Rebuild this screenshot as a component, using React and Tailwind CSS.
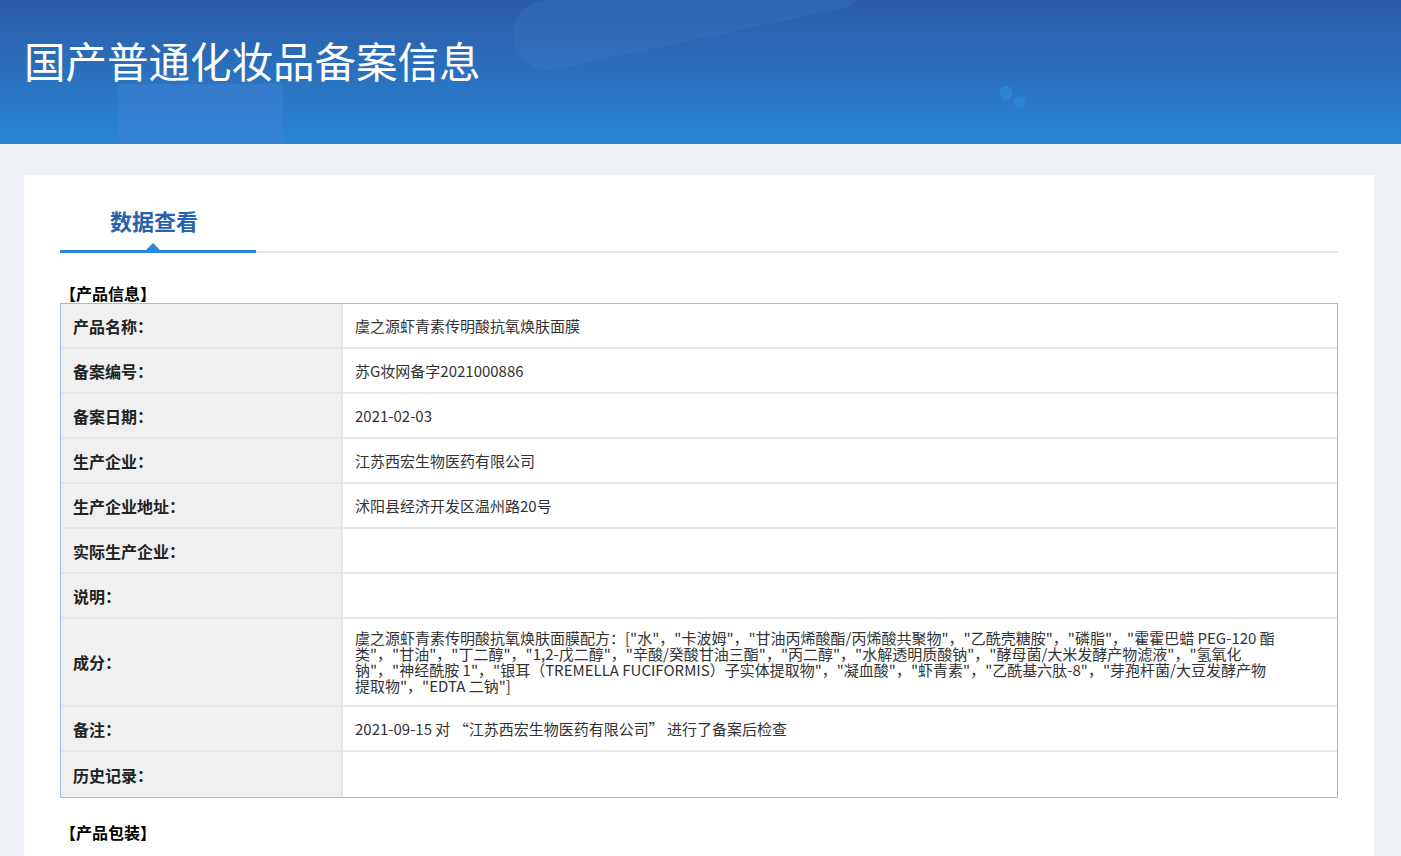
import React from 'react';

const rows = [
  { label: '产品名称：', value: '虞之源虾青素传明酸抗氧焕肤面膜' },
  { label: '备案编号：', value: '苏G妆网备字2021000886' },
  { label: '备案日期：', value: '2021-02-03' },
  { label: '生产企业：', value: '江苏西宏生物医药有限公司' },
  { label: '生产企业地址：', value: '沭阳县经济开发区温州路20号' },
  { label: '实际生产企业：', value: '' },
  { label: '说明：', value: '' },
  {
    label: '成分：',
    value:
      '虞之源虾青素传明酸抗氧焕肤面膜配方：["水"，"卡波姆"，"甘油丙烯酸酯/丙烯酸共聚物"，"乙酰壳糖胺"，"磷脂"，"霍霍巴蜡 PEG-120 酯类"，"甘油"，"丁二醇"，"1,2-戊二醇"，"辛酸/癸酸甘油三酯"，"丙二醇"，"水解透明质酸钠"，"酵母菌/大米发酵产物滤液"，"氢氧化钠"，"神经酰胺 1"，"银耳（TREMELLA FUCIFORMIS）子实体提取物"，"凝血酸"，"虾青素"，"乙酰基六肽-8"，"芽孢杆菌/大豆发酵产物提取物"，"EDTA 二钠"]',
    tall: true,
  },
  { label: '备注：', value: '2021-09-15 对 “江苏西宏生物医药有限公司” 进行了备案后检查' },
  { label: '历史记录：', value: '' },
];

const Header = () => {
  return (
    <header className="relative h-[144px] overflow-hidden bg-gradient-to-b from-[#2a5ca8] to-[#2985d3]">
      {/* soft background shapes */}
      <div className="absolute left-[118px] top-[84px] h-[60px] w-[165px] bg-[#3d82d4] opacity-50" />
      <div className="absolute left-[510px] top-[-30px] h-[70px] w-[360px] -rotate-12 rounded-full bg-[#4a86cc] opacity-20" />
      <div className="absolute left-[1000px] top-[86px] flex gap-[2px] opacity-60">
        <div className="h-[14px] w-[12px] rounded-full bg-[#2f8ce0]" />
        <div className="mt-[10px] h-[12px] w-[11px] rounded-full bg-[#2f8ce0]" />
      </div>
      <h1 className="relative pl-[24px] pt-[34px] text-[41.5px] leading-[52px] text-white">
        国产普通化妆品备案信息
      </h1>
    </header>
  );
};

const App = () => {
  return (
    <div className="min-h-[856px] bg-[#eef2f6]" style={{ fontFamily: '"Noto Sans CJK SC", sans-serif' }}>
      <Header />
      <main className="px-[24px] pt-[31px]">
        <div className="w-[1350px] bg-white px-[36px] pt-[27px] pb-[24px]">
          {/* tabs */}
          <div className="flex border-b-2 border-[#e6e6e6]">
            <div className="relative -mb-[2px] w-[196px] border-b-[3px] border-[#2a87d8] pb-[12px] pr-[8px] text-center text-[22px] font-bold leading-[36px] text-[#2662ad]">
              数据查看
              <div className="absolute bottom-0 left-[86px] h-0 w-0 border-x-[7px] border-b-[7px] border-x-transparent border-b-[#2a87d8]" />
            </div>
          </div>

          <h2 className="mt-[30px] text-[16px] font-bold leading-[20px] text-black">【产品信息】</h2>
          <div className="border border-[#9cbce8]">
            {rows.map((r, i) => (
              <div key={i} className={`flex ${i < rows.length - 1 ? 'border-b-2 border-[#e6e6e6]' : ''} ${r.tall ? 'h-[88px]' : 'h-[45px]'}`}>
                <div className="flex w-[280px] shrink-0 items-center bg-[#f0f0f0] pl-[12px] text-[16px] font-bold text-[#222]">
                  {r.label}
                </div>
                <div className="flex flex-1 items-center border-l-2 border-[#e6e6e6] pl-[12px] pr-[60px] text-[15px] leading-[16px] text-[#333]">
                  {r.value}
                </div>
              </div>
            ))}
          </div>

          <h2 className="mt-[24px] text-[16px] font-bold leading-[20px] text-black">【产品包装】</h2>
        </div>
      </main>
    </div>
  );
};

export default App;
